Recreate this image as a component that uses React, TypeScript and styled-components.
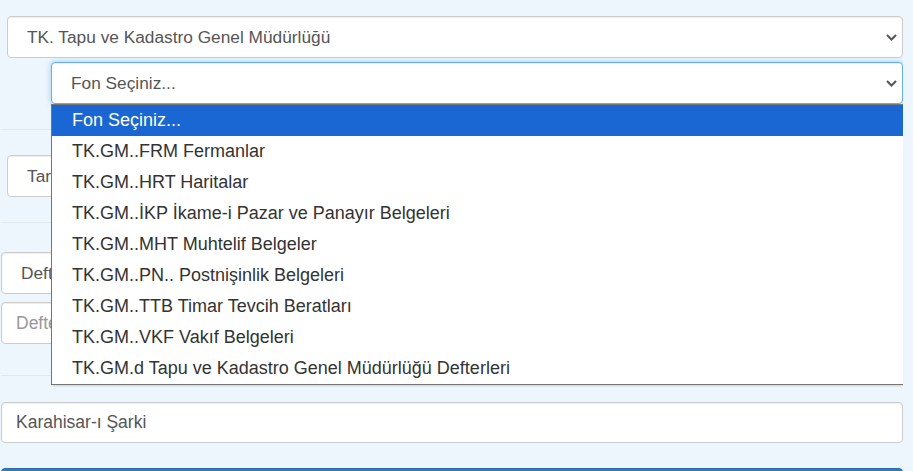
import styled, { createGlobalStyle } from 'styled-components';

const GlobalStyle = createGlobalStyle`
  html, body {
    margin: 0;
    padding: 0;
    background: #eef6fd;
  }
  body {
    font-family: 'Liberation Sans', Arial, Helvetica, sans-serif;
  }
`;

const Page = styled.div`
  box-sizing: border-box;
  width: 903px;
  height: 471px;
  overflow: hidden;
  padding: 16px 0 0 1px;
  display: flex;
  flex-direction: column;
`;

const Box = styled.div<{ $indent?: number; $focused?: boolean; $h?: number }>`
  position: relative;
  flex: none;
  box-sizing: border-box;
  height: ${(p) => p.$h ?? 42}px;
  margin-left: ${(p) => p.$indent ?? 0}px;
  border: 1px solid ${(p) => (p.$focused ? '#66afe9' : '#ccc')};
  border-radius: 4px;
  background: #fff;
  box-shadow: inset 0 1px 1px rgba(0, 0, 0, 0.075)
    ${(p) => (p.$focused ? ', 0 0 6px rgba(102, 175, 233, 0.6)' : '')};
  display: flex;
  align-items: center;
  color: #555;
`;

const SelectBox = styled(Box)`
  justify-content: space-between;
  padding: 0 5px 0 19px;
  font-size: 17.3px;
`;

const InputBox = styled(Box)`
  padding: 0 14px;
  font-size: 17.5px;
`;

const Placeholder = styled.span`
  color: #999;
`;

const Divider = styled.hr<{ $top: number; $bottom: number }>`
  flex: none;
  width: 100%;
  height: 0;
  border: 0;
  border-top: 1px solid #e3e8ed;
  margin: ${(p) => p.$top}px 0 ${(p) => p.$bottom}px;
`;

const Gap = styled.div<{ $h: number }>`
  height: ${(p) => p.$h}px;
  flex: none;
`;

const List = styled.ul`
  position: absolute;
  top: calc(100% + 1px);
  left: -1px;
  right: -2px;
  margin: 0;
  padding: 0;
  list-style: none;
  background: #fff;
  border: 1px solid #767676;
  box-shadow: 1px 1px 2px rgba(0, 0, 0, 0.15);
  z-index: 10;
`;

const Option = styled.li<{ $active?: boolean }>`
  height: 31px;
  line-height: 31px;
  padding-left: 20px;
  font-size: 18px;
  white-space: nowrap;
  color: ${(p) => (p.$active ? '#fff' : '#333')};
  background: ${(p) => (p.$active ? '#1a66d2' : 'transparent')};
`;

const Button = styled.div`
  box-sizing: border-box;
  height: 46px;
  flex: none;
  background: #337ab7;
  border: 1px solid #2e6da4;
  border-radius: 4px;
  color: #fff;
  font-size: 18px;
  display: flex;
  align-items: center;
  justify-content: center;
`;

const Chevron = () => (
  <svg width="11" height="7" viewBox="0 0 11 7" fill="none">
    <path d="M1 1 L5.5 5.5 L10 1" stroke="#555" strokeWidth="2" />
  </svg>
);

const options = [
  'Fon Seçiniz...',
  'TK.GM..FRM Fermanlar',
  'TK.GM..HRT Haritalar',
  'TK.GM..İKP İkame-i Pazar ve Panayır Belgeleri',
  'TK.GM..MHT Muhtelif Belgeler',
  'TK.GM..PN.. Postnişinlik Belgeleri',
  'TK.GM..TTB Timar Tevcih Beratları',
  'TK.GM..VKF Vakıf Belgeleri',
  'TK.GM.d Tapu ve Kadastro Genel Müdürlüğü Defterleri',
];

export default function App() {
  return (
    <>
      <GlobalStyle />
      <Page>
        <SelectBox $indent={6}>
          <span>TK. Tapu ve Kadastro Genel Müdürlüğü</span>
          <Chevron />
        </SelectBox>
        <Gap $h={4} />
        <SelectBox $indent={50} $focused>
          <span>Fon Seçiniz...</span>
          <Chevron />
          <List>
            {options.map((o, i) => (
              <Option key={o} $active={i === 0}>
                {o}
              </Option>
            ))}
          </List>
        </SelectBox>
        <Divider $top={25} $bottom={25} />
        <SelectBox $indent={6}>
          <span>Tarih Seçiniz...</span>
          <Chevron />
        </SelectBox>
        <Divider $top={25} $bottom={29} />
        <SelectBox>
          <span>Defter Türü Seçiniz...</span>
          <Chevron />
        </SelectBox>
        <Gap $h={8} />
        <InputBox>
          <Placeholder>Defter No</Placeholder>
        </InputBox>
        <Divider $top={31} $bottom={26} />
        <InputBox $h={41}>Karahisar-ı Şarki</InputBox>
        <Gap $h={25} />
        <Button>Ara</Button>
      </Page>
    </>
  );
}
